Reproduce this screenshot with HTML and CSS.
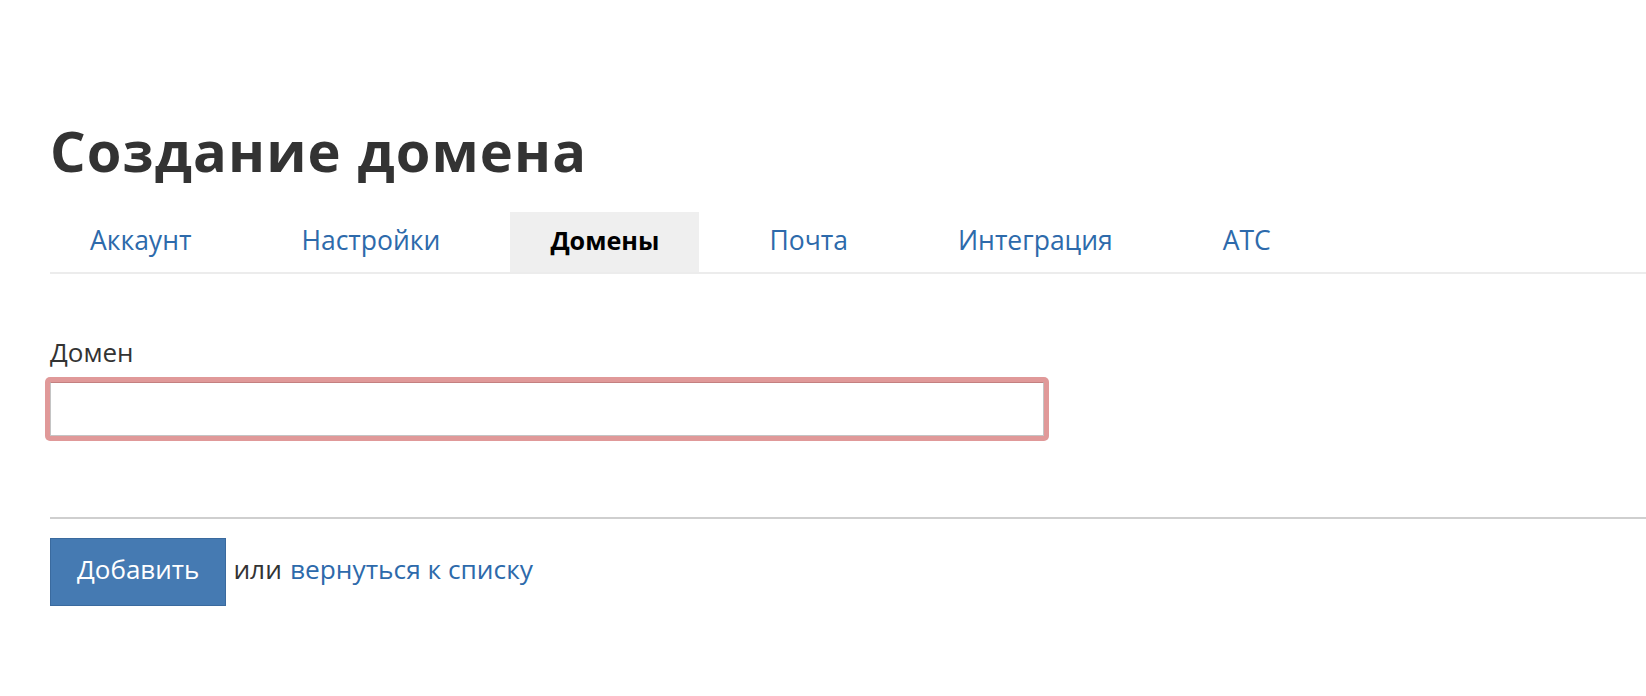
FILE: index.html
```html
<!DOCTYPE html>
<html lang="ru">
<head>
<meta charset="utf-8">
<title>Создание домена</title>
<link rel="stylesheet" href="styles.css">
</head>
<body>
<div class="page">
  <h1 class="title">Создание домена</h1>
  <ul class="tabs">
    <li class="tab"><a href="#">Аккаунт</a></li>
    <li class="tab"><a href="#">Настройки</a></li>
    <li class="tab active"><a href="#">Домены</a></li>
    <li class="tab"><a href="#">Почта</a></li>
    <li class="tab"><a href="#">Интеграция</a></li>
    <li class="tab"><a href="#">АТС</a></li>
  </ul>
  <form class="form">
    <label class="label" for="domain">Домен</label>
    <div class="ring"><input class="input" id="domain" type="text"></div>
    <hr class="divider">
    <div class="actions">
      <button class="btn" type="button">Добавить</button>
      <span class="or">или</span>
      <a class="link" href="#">вернуться к списку</a>
    </div>
  </form>
</div>
</body>
</html>
```

FILE: styles.css
```css
html, body {
  margin: 0;
  padding: 0;
  background: #fff;
}
body {
  font-family: "Open Sans", "Liberation Sans", sans-serif;
  color: #333;
}
.page {
  padding-left: 50px;
}
.title {
  margin: 117px 0 0 0;
  font-size: 56px;
  line-height: 67px;
  font-weight: 700;
  letter-spacing: 1.1px;
  color: #333;
}
.tabs {
  list-style: none;
  margin: 28px 0 0 0;
  padding: 0;
  display: flex;
  gap: 30px;
  border-bottom: 2px solid #ececec;
}
.tab a {
  display: block;
  height: 56px;
  padding: 0 40px 4px;
  line-height: 56px;
  font-size: 26.5px;
  color: #2d6aab;
  text-decoration: none;
}
.tab.active a {
  background: #efefef;
  color: #000;
  font-weight: 700;
  font-size: 25.2px;
}
.form {
  margin: 0;
}
.label {
  display: block;
  margin-top: 60px;
  font-size: 26px;
  line-height: 36px;
  color: #333;
}
.ring {
  margin: 7px 0 0 -5px;
  width: 994px;
  padding: 5px;
  background: #e09999;
  border-radius: 5px;
}
.input {
  display: block;
  box-sizing: border-box;
  width: 994px;
  height: 54px;
  margin: 0;
  border: 1px solid #c4c4c4;
  border-top-color: #c48080;
  background: #fff;
  outline: none;
  font-size: 26px;
}
.divider {
  margin: 76px 0 0 0;
  border: 0;
  height: 2px;
  background: #cfcfcf;
}
.actions {
  margin-top: 19px;
  display: flex;
  align-items: baseline;
  font-size: 26.3px;
}
.btn {
  height: 68px;
  box-sizing: border-box;
  padding: 0 26px 6px;
  line-height: 60px;
  font-family: inherit;
  font-size: 26px;
  color: #fff;
  background: #457ab2;
  border: 1px solid #3a6a9e;
  border-radius: 0;
}
.or {
  margin-left: 7px;
  color: #333;
}
.link {
  margin-left: 8px;
  color: #2d6aab;
  text-decoration: none;
}
```
